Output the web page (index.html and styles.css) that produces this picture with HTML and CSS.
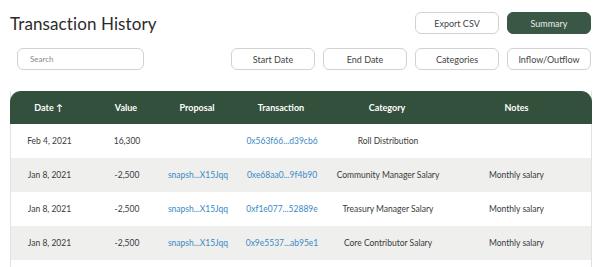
FILE: index.html
```html
<!DOCTYPE html>
<html lang="en">
<head>
  <meta charset="utf-8" />
  <title>Transaction History</title>
  <link rel="stylesheet" href="styles.css">
</head>
<body>
  <div class="page">
    <div class="top-row">
      <h1>Transaction History</h1>
      <div class="actions">
        <button class="btn">Export CSV</button>
        <button class="btn btn-dark">Summary</button>
      </div>
    </div>
    <div class="filter-row">
      <input type="text" class="search" placeholder="Search" />
      <div class="filters">
        <button class="btn">Start Date</button>
        <button class="btn">End Date</button>
        <button class="btn">Categories</button>
        <button class="btn">Inflow/Outflow</button>
      </div>
    </div>
    <div class="table">
      <div class="row head">
        <div>Date &#8593;</div>
        <div>Value</div>
        <div>Proposal</div>
        <div>Transaction</div>
        <div>Category</div>
        <div>Notes</div>
      </div>
      <div class="row">
        <div>Feb 4, 2021</div>
        <div>16,300</div>
        <div></div>
        <div class="link">0x563f66...d39cb6</div>
        <div>Roll Distribution</div>
        <div></div>
      </div>
      <div class="row alt">
        <div>Jan 8, 2021</div>
        <div>-2,500</div>
        <div class="link">snapsh...X15Jqq</div>
        <div class="link">0xe68aa0...9f4b90</div>
        <div>Community Manager Salary</div>
        <div>Monthly salary</div>
      </div>
      <div class="row">
        <div>Jan 8, 2021</div>
        <div>-2,500</div>
        <div class="link">snapsh...X15Jqq</div>
        <div class="link">0xf1e077...52889e</div>
        <div>Treasury Manager Salary</div>
        <div>Monthly salary</div>
      </div>
      <div class="row alt">
        <div>Jan 8, 2021</div>
        <div>-2,500</div>
        <div class="link">snapsh...X15Jqq</div>
        <div class="link">0x9e5537...ab95e1</div>
        <div>Core Contributor Salary</div>
        <div>Monthly salary</div>
      </div>
      <div class="row">
        <div></div><div></div><div></div><div></div><div></div><div></div>
      </div>
    </div>
  </div>
</body>
</html>
```

FILE: styles.css
```css
* {
  box-sizing: border-box;
  margin: 0;
  padding: 0;
}
body {
  font-family: 'Lato', sans-serif;
  color: #333;
  background: #fff;
  overflow: hidden;
}
.page {
  padding: 9px 9px 0 10px;
}
.top-row {
  display: flex;
  justify-content: space-between;
  align-items: center;
  height: 27px;
  padding-top: 1px;
}
h1 {
  font-size: 17px;
  font-weight: 400;
  color: #2b2b2b;
  letter-spacing: 0.1px;
}
.actions, .filters {
  display: flex;
  gap: 8px;
}
.btn {
  width: 84px;
  height: 22px;
  font-family: 'Lato', sans-serif;
  font-size: 9px;
  color: #444;
  background: #fff;
  border: 1px solid #d2d2d2;
  border-radius: 6px;
}
.btn-dark {
  background: #3a5644;
  border-color: #3a5644;
  color: #e8ece9;
}
.filter-row {
  display: flex;
  justify-content: space-between;
  align-items: center;
  margin-top: 12px;
  padding-left: 7px;
}
.search {
  width: 127px;
  height: 22px;
  font-family: 'Lato', sans-serif;
  font-size: 8px;
  padding-left: 12px;
  border: 1px solid #d2d2d2;
  border-radius: 6px;
}
.search::placeholder {
  color: #888;
}
.table {
  margin-top: 21px;
  width: 582px;
  border-left: 1px solid #e2e2e2;
  border-right: 1px solid #e2e2e2;
}
.row {
  display: grid;
  grid-template-columns: 77px 78px 64px 104px 108px 1fr;
  height: 34px;
  align-items: center;
  text-align: center;
  font-size: 8.5px;
  color: #3a3a3a;
}
.row.alt {
  background: #efefee;
}
.row.head {
  height: 33px;
  background: #33503c;
  color: #fff;
  font-weight: 700;
  font-size: 9px;
  border-radius: 11px 11px 0 0;
  margin: 0 -1px;
}
.link {
  color: #3a8ac4;
}
```
